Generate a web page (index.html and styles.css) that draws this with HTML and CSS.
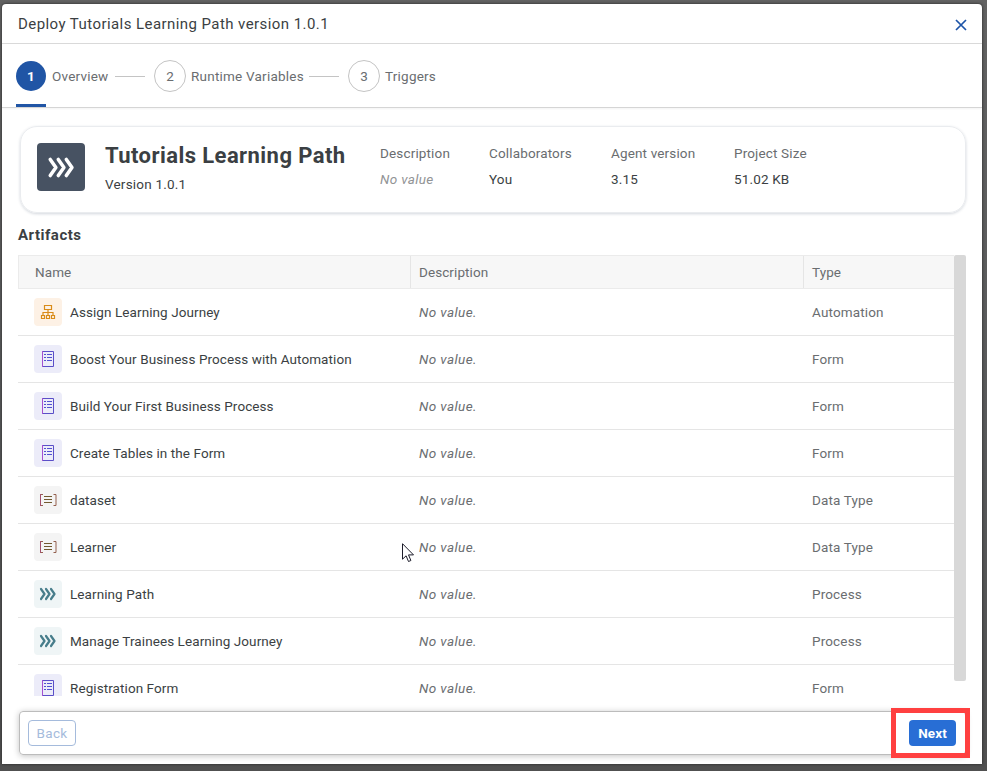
FILE: index.html
```html
<!DOCTYPE html>
<html lang="en">
<head>
<meta charset="utf-8">
<title>Deploy Tutorials Learning Path</title>
<link rel="stylesheet" href="styles.css">
</head>
<body>
<svg class="defs" aria-hidden="true">
  <symbol id="chevrons" viewBox="0 0 28 28"><path d="M7 9l3.500 5L7 19M12 9l3.500 5-3.500 5M17 9l3.500 5-3.500 5" fill="none" stroke="currentColor" stroke-width="2.200" stroke-linecap="round" stroke-linejoin="round"/></symbol>
  <symbol id="flow" viewBox="0 0 28 28"><path d="M10.500 7.500h7v4h-7zM7.500 17.500h3v3h-3zM12.500 17.500h3v3h-3zM17.500 17.500h3v3h-3zM14 11.500v6M9 17v-2.500h10V17" fill="none" stroke="currentColor" stroke-width="1.200"/></symbol>
  <symbol id="form" viewBox="0 0 28 28"><path d="M8.500 6.500h11v15h-11z" fill="none" stroke="#5a4fc8"/><path d="M10 9.500h2M13 9.500h5M10 12.500h2M13 12.500h5M10 15.500h2M13 15.500h5" stroke="#5252d0"/><path d="M8.500 6v16" stroke="#a450d0"/></symbol>
  <symbol id="data" viewBox="0 0 28 28"><path d="M9 8.500H6.500v11H9M19.500 8.500H22v11h-2.500" fill="none" stroke="#94604f"/><path d="M6.500 8v12" stroke="#a3506c"/><path d="M10 10.500h8M10 13.500h8M10 16.500h8" stroke="#725a30"/></symbol>
</svg>
<main class="dialog">
  <header class="titlebar">
    <h1>Deploy Tutorials Learning Path version 1.0.1</h1>
    <svg class="close" viewBox="0 0 12 12"><path d="M1 1l10 10M11 1L1 11" stroke="currentColor" stroke-width="1.700"/></svg>
  </header>
  <nav class="steps">
    <div class="step active"><span class="num">1</span><span class="label overview">Overview</span></div>
    <i class="line"></i>
    <div class="step"><span class="num">2</span><span class="label runtime">Runtime Variables</span></div>
    <i class="line"></i>
    <div class="step"><span class="num">3</span><span class="label">Triggers</span></div>
  </nav>
  <section class="card">
    <div class="logo"><svg viewBox="0 0 28 28"><use href="#chevrons"/></svg></div>
    <div class="project"><h2>Tutorials Learning Path</h2><p>Version 1.0.1</p></div>
    <dl class="facts">
      <div class="fact"><dt>Description</dt><dd class="none">No value</dd></div>
      <div class="fact"><dt>Collaborators</dt><dd>You</dd></div>
      <div class="fact"><dt>Agent version</dt><dd>3.15</dd></div>
      <div class="fact"><dt>Project Size</dt><dd>51.02 KB</dd></div>
    </dl>
  </section>
  <h3>Artifacts</h3>
  <section class="table-wrap">
    <div class="table">
      <div class="row head"><span>Name</span><span>Description</span><span>Type</span></div>
      <div class="row"><span class="name"><svg class="icon orange"><use href="#flow"/></svg>Assign Learning Journey</span><em>No value.</em><span class="type">Automation</span></div>
      <div class="row"><span class="name"><svg class="icon violet"><use href="#form"/></svg>Boost Your Business Process with Automation</span><em>No value.</em><span class="type">Form</span></div>
      <div class="row"><span class="name"><svg class="icon violet"><use href="#form"/></svg>Build Your First Business Process</span><em>No value.</em><span class="type">Form</span></div>
      <div class="row"><span class="name"><svg class="icon violet"><use href="#form"/></svg>Create Tables in the Form</span><em>No value.</em><span class="type">Form</span></div>
      <div class="row"><span class="name"><svg class="icon gray"><use href="#data"/></svg>dataset</span><em>No value.</em><span class="type">Data Type</span></div>
      <div class="row"><span class="name"><svg class="icon gray"><use href="#data"/></svg>Learner</span><em>No value.</em><span class="type">Data Type</span></div>
      <div class="row"><span class="name"><svg class="icon teal"><use href="#chevrons"/></svg>Learning Path</span><em>No value.</em><span class="type">Process</span></div>
      <div class="row"><span class="name"><svg class="icon teal"><use href="#chevrons"/></svg>Manage Trainees Learning Journey</span><em>No value.</em><span class="type">Process</span></div>
      <div class="row"><span class="name"><svg class="icon violet"><use href="#form"/></svg>Registration Form</span><em>No value.</em><span class="type">Form</span></div>
    </div>
    <div class="scrollbar"></div>
  </section>
  <footer class="actions">
    <button class="back" disabled>Back</button>
    <button class="next">Next</button>
  </footer>
</main>
<div class="highlight"></div>
<svg class="cursor" viewBox="0 0 12 20"><path d="M.5.700v15.500l3.600-3.400 2.400 5.700 2.400-1-2.400-5.600h5z" fill="#fff" stroke="#1d1d2b"/></svg>
</body>
</html>
```
FILE: styles.css
```css
* { box-sizing: border-box; }
body {
  margin: 0;
  width: 987px;
  height: 771px;
  padding: 4px 5px 7px 2px;
  overflow: hidden;
  background: linear-gradient(#626262, #575859 60%, #505050);
  color: #3b3f43;
  font: 13.5px/20px Roboto, "Liberation Sans", sans-serif;
  letter-spacing: .08px;
}
h1, h2, h3, p, dl, dd { margin: 0; }
.defs { position: absolute; width: 0; height: 0; }
.dialog {
  display: flex;
  flex-direction: column;
  width: 980px;
  height: 760px;
  background: #fff;
  border-radius: 4px 4px 0 0;
  box-shadow: 0 0 3px #222;
}
.titlebar {
  display: flex;
  align-items: center;
  justify-content: space-between;
  height: 40px;
  padding: 0 15px 0 16px;
  border-bottom: 1px solid #d9d9d9;
}
h1 { font-size: 15px; font-weight: 400; letter-spacing: .43px; }
.close { width: 12px; height: 12px; color: #1d54a8; margin-top: 2px; }
.steps {
  display: flex;
  align-items: center;
  height: 64px;
  padding-left: 14px;
  border-bottom: 1px solid #d5d5d5;
  box-shadow: 0 1px 2px #0000000d;
  color: #6a6d70;
}
.step { display: flex; align-items: center; gap: 5px; height: 100%; }
.label { letter-spacing: .22px; white-space: nowrap; }
.num {
  display: grid;
  place-items: center;
  width: 32px;
  height: 32px;
  border: 1px solid #c4c4c4;
  border-radius: 50%;
}
.step.active { gap: 6px; background: linear-gradient(#2055a5, #2055a5) 0 100% / 30px 3px no-repeat; }
.active .num { width: 30px; height: 30px; border: 0; background: #2055a5; color: #fff; font-weight: 700; }
.overview { width: 58px; }
.runtime { width: 113px; }
.line { width: 30px; height: 1px; margin: 2px 9px 0 5px; background: #c4c4c4; }
.card {
  display: flex;
  flex: none;
  height: 87px;
  margin: 18px 16px 0 18px;
  padding: 16px;
  border: 1px solid #eaecef;
  border-radius: 17px;
  box-shadow: 0 1px 3px #21365633;
}
.logo {
  display: grid;
  place-items: center;
  flex: none;
  width: 48px;
  height: 48px;
  border-radius: 4px;
  background: #475262;
  color: #fff;
}
.logo svg { width: 45px; height: 45px; }
.project { flex: none; width: 295px; padding-left: 20px; }
h2 { font-size: 22px; line-height: 26px; font-weight: 700; letter-spacing: .43px; white-space: nowrap; }
.project p { margin-top: 5px; letter-spacing: .2px; }
.facts { display: grid; grid-template-columns: 109px 122px 123px 110px; color: #6a6d70; letter-spacing: .15px; }
.fact dt { height: 26px; }
.fact dd { color: #3b3f43; }
.fact .none { color: #919395; font-style: italic; letter-spacing: .35px; }
h3 { margin: 12px 0 10px 16px; font-size: 15px; line-height: 20px; font-weight: 700; letter-spacing: .5px; }
.table-wrap { display: flex; height: 441px; margin: 0 16px; flex: none; overflow: hidden; }
.table { width: 936px; height: 441px; overflow: hidden; }
.row {
  display: grid;
  grid-template-columns: 392px 393px 151px;
  align-items: center;
  height: 47px;
  border-bottom: 1px solid #e5e5e5;
  color: #6a6d70;
}
.row > * { padding-left: 9px; }
.row em { letter-spacing: .4px; }
.row .type { letter-spacing: .15px; }
.row .name { display: flex; align-items: center; gap: 8px; padding-left: 16px; color: #3b3f43; }
.head { height: 34px; background: #f7f7f7; border: 1px solid #ebebeb; border-right: 0; }
.head span { height: 32px; line-height: 32px; border-left: 1px solid #e5e5e5; padding-left: 8px; }
.head span:first-child { border: 0; padding-left: 16px; }
.head { grid-template-columns: 391px 393px 151px; }
.icon { width: 28px; height: 28px; border-radius: 4px; flex: none; }
.orange { color: #d98b18; background: #fdf1e5; }
.violet { background: #ececf9; }
.gray { background: #f4f4f4; }
.teal { color: #477d8b; background: #eff5f6; }
.scrollbar { width: 12px; height: 426px; background: #d8d8d8; border-radius: 2px; }
.actions {
  display: flex;
  align-items: center;
  justify-content: space-between;
  flex: none;
  height: 44px;
  margin: 15px 16px 0 17px;
  padding: 0 9px 0 8px;
  border: 1px solid #bcbcbc;
  border-radius: 4px;
  box-shadow: 0 1px 6px #0000003d;
}
button { height: 26px; padding: 0; border-radius: 4px; font: 13.5px/24px Roboto, sans-serif; }
.back { width: 48px; background: #fff; border: 1px solid #a5bbdc; color: #a5bbdc; letter-spacing: .3px; }
.next { width: 47px; background: #286ed5; border: 0; color: #fff; font-weight: 700; letter-spacing: .1px; }
.highlight { position: absolute; left: 891px; top: 708px; width: 79px; height: 50px; border: 5px solid #ff4040; }
.cursor { position: absolute; left: 402px; top: 543px; width: 12px; height: 20px; }
```
